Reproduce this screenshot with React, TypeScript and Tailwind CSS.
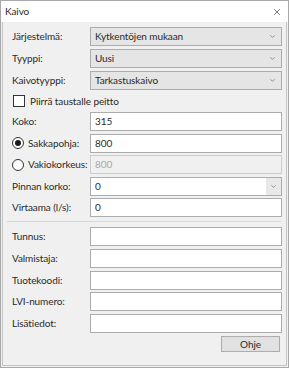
import { ChevronDown, X } from "lucide-react";

const font = { fontFamily: 'Lato, "Noto Sans", sans-serif' };

function Combo({ value, white }: { value: string; white?: boolean }) {
    if (white) {
        return (
            <div className="flex h-[19px] w-[192px] items-stretch border border-[#acacac] bg-white">
                <span className="flex flex-1 items-center pl-[4px]">{value}</span>
                <span className="flex w-[15px] items-center justify-center bg-[#e8e8e8]">
                    <ChevronDown className="h-[7px] w-[7px] text-[#707070]" strokeWidth={2.5} />
                </span>
            </div>
        );
    }
    return (
        <div className="flex h-[19px] w-[192px] items-center justify-between border border-[#acacac] bg-[#e5e5e5] pl-[4px] pr-[5px]">
            <span>{value}</span>
            <ChevronDown className="h-[7px] w-[7px] text-[#707070]" strokeWidth={2.5} />
        </div>
    );
}

function Input({ value, disabled }: { value?: string; disabled?: boolean }) {
    return (
        <div
            className={
                disabled
                    ? "flex h-[19px] w-[192px] items-center border border-[#cccccc] bg-[#f0f0f0] pl-[4px] text-[#a8a8a8]"
                    : "flex h-[19px] w-[192px] items-center border border-[#acacac] bg-white pl-[4px]"
            }
        >
            {value}
        </div>
    );
}

function Row({ label, children }: { label: React.ReactNode; children: React.ReactNode }) {
    return (
        <div className="flex items-center">
            <div className="w-[78px] shrink-0 whitespace-nowrap">{label}</div>
            {children}
        </div>
    );
}

function Radio({ checked, label }: { checked?: boolean; label: string }) {
    return (
        <div className="flex items-center gap-[4px]">
            <span className="flex h-[12px] w-[12px] shrink-0 items-center justify-center rounded-full border border-[#333333] bg-white">
                {checked && <span className="h-[6px] w-[6px] rounded-full bg-[#1a1a1a]" />}
            </span>
            <span>{label}</span>
        </div>
    );
}

export default function App() {
    return (
        <div
            style={font}
            className="flex h-[368px] w-[289px] flex-col border border-[#a8a8a8] bg-[#f0f0f0] text-[10px] tracking-[-0.1px] text-[#2a2a2a]"
        >
            <div className="flex h-[21px] items-center justify-between bg-white pl-[4px] pr-[6px]">
                <span>Kaivo</span>
                <X className="h-[10px] w-[10px] text-[#333333]" strokeWidth={1.6} />
            </div>
            <div className="mx-[1px] mb-[1px] flex flex-1 flex-col border-b border-l border-r border-[#c4c4c4] pl-[9px] pt-[5px]">
                <div className="flex flex-col gap-[3px]">
                    <Row label="Järjestelmä:">
                        <Combo value="Kytkentöjen mukaan" />
                    </Row>
                    <Row label="Tyyppi:">
                        <Combo value="Uusi" />
                    </Row>
                    <Row label="Kaivotyyppi:">
                        <Combo value="Tarkastuskaivo" />
                    </Row>
                    <div className="flex h-[16px] items-center gap-[5px] pl-[1px]">
                        <span className="h-[12px] w-[12px] border border-[#333333] bg-white" />
                        <span>Piirrä taustalle peitto</span>
                    </div>
                </div>
                <div className="mt-[3px] flex flex-col gap-[2.5px]">
                    <Row label="Koko:">
                        <Input value="315" />
                    </Row>
                    <Row label={<Radio checked label="Sakkapohja:" />}>
                        <Input value="800" />
                    </Row>
                    <Row label={<Radio label="Vakiokorkeus:" />}>
                        <Input value="800" disabled />
                    </Row>
                    <Row label="Pinnan korko:">
                        <Combo value="0" white />
                    </Row>
                    <Row label="Virtaama (l/s):">
                        <Input value="0" />
                    </Row>
                </div>
                <div className="mb-[5px] -ml-[5px] mr-[5px] mt-[4px] h-px bg-[#d6d6d6]" />
                <div className="flex flex-col gap-[2.75px]">
                    <Row label="Tunnus:">
                        <Input />
                    </Row>
                    <Row label="Valmistaja:">
                        <Input />
                    </Row>
                    <Row label="Tuotekoodi:">
                        <Input />
                    </Row>
                    <Row label="LVI-numero:">
                        <Input />
                    </Row>
                    <Row label="Lisätiedot:">
                        <Input />
                    </Row>
                </div>
                <div className="mt-[3px] flex justify-end pr-[6px]">
                    <button className="flex h-[16px] w-[59px] items-center justify-center border border-[#adadad] bg-[#e1e1e1]">
                        Ohje
                    </button>
                </div>
            </div>
        </div>
    );
}
